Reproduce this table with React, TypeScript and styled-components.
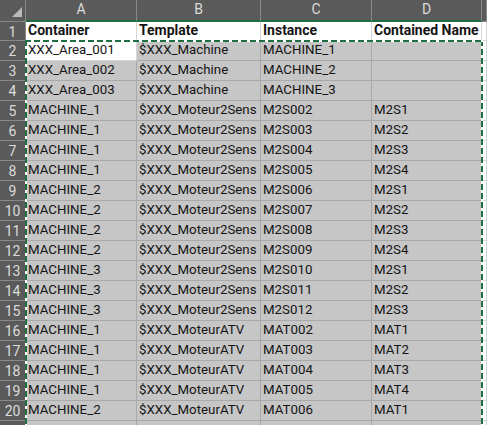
import React from "react";
import styled, { createGlobalStyle } from "styled-components";

const Global = createGlobalStyle`
  html, body { margin: 0; padding: 0; background: #ffffff; overflow: hidden; }
  * { box-sizing: border-box; }
`;

const GREEN = "#1f6e43";
const HEAD_BG = "#5a5a5a";
const HEAD_LINE = "#888888";
const SEL_BG = "#c6c6c6";
const SEL_LINE = "#a9a9a9";

const Sheet = styled.div`
  position: relative;
  display: grid;
  grid-template-columns: 26px 111px 124px 111px 110px 1fr;
  grid-template-rows: 22px 19px;
  grid-auto-rows: 20px;
  width: 487px;
  height: 425px;
  overflow: hidden;
  font-family: Roboto, "Liberation Sans", sans-serif;
`;

const Corner = styled.div`
  position: relative;
  background: ${HEAD_BG};
  border-right: 1px solid ${HEAD_LINE};
  border-bottom: 1px solid ${HEAD_LINE};
`;

const Triangle = styled.div`
  position: absolute;
  right: 3px;
  bottom: 4px;
  width: 0;
  height: 0;
  border-left: 10px solid transparent;
  border-bottom: 10px solid #b9b9b9;
`;

const ColHead = styled.div<{ $selected?: boolean }>`
  background: ${HEAD_BG};
  color: #dcdcdc;
  font-size: 14px;
  display: flex;
  align-items: center;
  justify-content: center;
  padding-bottom: 2px;
  border-right: 1px solid ${HEAD_LINE};
  border-bottom: ${(p) => (p.$selected ? `2px solid ${GREEN}` : `1px solid ${HEAD_LINE}`)};
`;

const RowHead = styled.div<{ $selected?: boolean }>`
  background: ${HEAD_BG};
  color: #dcdcdc;
  font-size: 14px;
  display: flex;
  align-items: center;
  justify-content: center;
  padding-top: 1px;
  border-bottom: 1px solid ${HEAD_LINE};
  border-right: 1px solid ${(p) => (p.$selected ? GREEN : HEAD_LINE)};
`;

const Cell = styled.div<{ $shade?: boolean; $bold?: boolean }>`
  background: ${(p) => (p.$shade ? SEL_BG : "#ffffff")};
  border-right: 1px solid ${(p) => (p.$shade ? SEL_LINE : "#d4d4d4")};
  border-bottom: 1px solid ${(p) => (p.$shade ? SEL_LINE : "#d4d4d4")};
  color: #141414;
  font-size: ${(p) => (p.$bold ? "14px" : "13.3px")};
  font-weight: ${(p) => (p.$bold ? 700 : 400)};
  display: flex;
  align-items: flex-end;
  padding: 0 2px 1px 2px;
  white-space: nowrap;
  overflow: hidden;
  line-height: 18px;
`;

const Ants = styled.div`
  position: absolute;
  left: 25px;
  top: 40px;
  width: 458px;
  bottom: -20px;
  pointer-events: none;
  background:
    repeating-linear-gradient(90deg, ${GREEN} 0 6px, #ffffff 6px 9px) top left / 100% 2px no-repeat,
    repeating-linear-gradient(180deg, ${GREEN} 0 6px, #ffffff 6px 9px) top left / 2px 100% no-repeat,
    repeating-linear-gradient(180deg, ${GREEN} 0 6px, #ffffff 6px 9px) top right / 2px 100% no-repeat;
`;

const header = ["Container", "Template", "Instance", "Contained Name"];

const rows: string[][] = [
  ["XXX_Area_001", "$XXX_Machine", "MACHINE_1", ""],
  ["XXX_Area_002", "$XXX_Machine", "MACHINE_2", ""],
  ["XXX_Area_003", "$XXX_Machine", "MACHINE_3", ""],
  ["MACHINE_1", "$XXX_Moteur2Sens", "M2S002", "M2S1"],
  ["MACHINE_1", "$XXX_Moteur2Sens", "M2S003", "M2S2"],
  ["MACHINE_1", "$XXX_Moteur2Sens", "M2S004", "M2S3"],
  ["MACHINE_1", "$XXX_Moteur2Sens", "M2S005", "M2S4"],
  ["MACHINE_2", "$XXX_Moteur2Sens", "M2S006", "M2S1"],
  ["MACHINE_2", "$XXX_Moteur2Sens", "M2S007", "M2S2"],
  ["MACHINE_2", "$XXX_Moteur2Sens", "M2S008", "M2S3"],
  ["MACHINE_2", "$XXX_Moteur2Sens", "M2S009", "M2S4"],
  ["MACHINE_3", "$XXX_Moteur2Sens", "M2S010", "M2S1"],
  ["MACHINE_3", "$XXX_Moteur2Sens", "M2S011", "M2S2"],
  ["MACHINE_3", "$XXX_Moteur2Sens", "M2S012", "M2S3"],
  ["MACHINE_1", "$XXX_MoteurATV", "MAT002", "MAT1"],
  ["MACHINE_1", "$XXX_MoteurATV", "MAT003", "MAT2"],
  ["MACHINE_1", "$XXX_MoteurATV", "MAT004", "MAT3"],
  ["MACHINE_1", "$XXX_MoteurATV", "MAT005", "MAT4"],
  ["MACHINE_2", "$XXX_MoteurATV", "MAT006", "MAT1"],
  ["", "", "", ""],
];

export default function App() {
  return (
    <>
      <Global />
      <Sheet>
        <Corner>
          <Triangle />
        </Corner>
        {["A", "B", "C", "D"].map((c) => (
          <ColHead key={c} $selected>
            {c}
          </ColHead>
        ))}
        <ColHead />
        <RowHead>1</RowHead>
        {header.map((h) => (
          <Cell key={h} $bold>
            {h}
          </Cell>
        ))}
        <Cell />
        {rows.map((r, i) => (
          <React.Fragment key={i}>
            <RowHead $selected>{i < 19 ? i + 2 : ""}</RowHead>
            {r.map((v, j) => (
              <Cell key={j} $shade={!(i === 0 && j === 0)}>
                {v}
              </Cell>
            ))}
            <Cell />
          </React.Fragment>
        ))}
        <Ants />
      </Sheet>
    </>
  );
}
